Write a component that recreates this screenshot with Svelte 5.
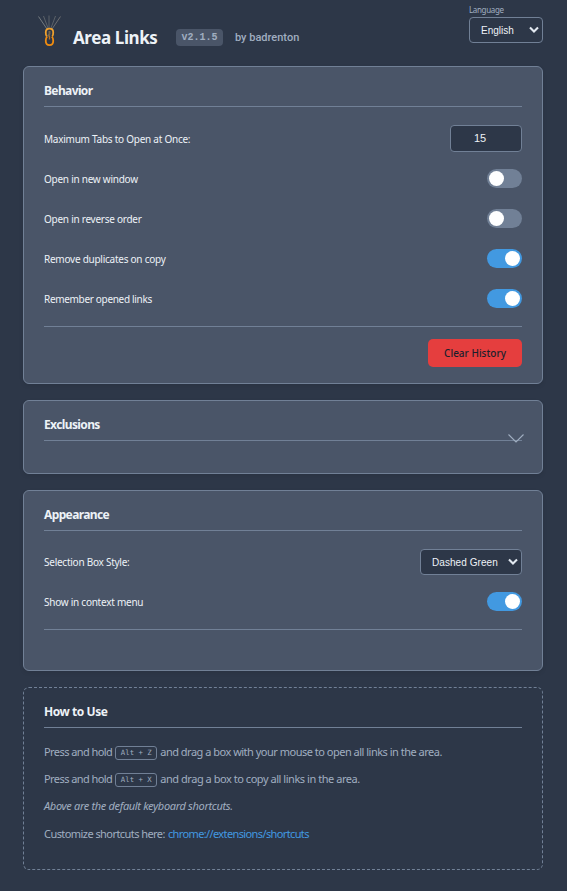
<script>
  let newWindow = $state(false);
  let reverse = $state(false);
  let dedupe = $state(true);
  let remember = $state(true);
  let contextMenu = $state(true);
  let maxTabs = $state('15');
</script>

{#snippet arrow()}
  <svg class="arrow" width="10" height="8" viewBox="0 0 10 8"><path d="M1 1.5 5 5.5 9 1.5" fill="none" stroke="#e2e8f0" stroke-width="2.1" /></svg>
{/snippet}

<main>
  <header>
    <svg class="logo" width="26" height="32" viewBox="0 0 26 32" fill="none">
      <g stroke="#5c6269" stroke-width="1">
        <path d="M1.5 1.5 10 14" stroke="#747b80" /><path d="M6.5 1 11 13" /><path d="M12 .5V13" /><path d="M18.500 1 14 13" /><path d="M23.500 1.500 15 14" stroke="#6c6d70" />
      </g>
      <path d="M9.800 21.500c-1.200-1.200-1-2.500-1-4.500 0-4.600 7.400-4.600 7.400 0 0 2 .2 3.300-1 4.500" stroke="#eda02e" stroke-width="1.800" />
      <path d="M12.500 16v3l-2 2.500" stroke="#77674d" stroke-width="2" />
      <path d="M10.300 21.800c-1.700 1-1.500 2.200-1.500 4.400 0 5.200 7.400 5.200 7.400 0 0-2.200.2-3.400-1.500-4.400" stroke="#f08c10" stroke-width="1.800" />
      <path d="M12.500 20.500v4" stroke="#b6742a" stroke-width="1.300" />
    </svg>
    <h1>Area Links</h1>
    <span class="version">v2.1.5</span>
    <span class="author">by badrenton</span>
    <div class="language">
      <span class="langlabel">Language</span>
      <button class="select lang"><span>English</span>{@render arrow()}</button>
    </div>
  </header>

  <section class="behavior">
    <h2>Behavior</h2>
    <div class="row"><label for="max" class="t1">Maximum Tabs to Open at Once:</label><input id="max" bind:value={maxTabs} /></div>
    <div class="row"><span class="t2">Open in new window</span><button class="toggle" class:on={newWindow} aria-label="Open in new window" onclick={() => (newWindow = !newWindow)}><i></i></button></div>
    <div class="row"><span class="t3">Open in reverse order</span><button class="toggle" class:on={reverse} aria-label="Open in reverse order" onclick={() => (reverse = !reverse)}><i></i></button></div>
    <div class="row"><span class="t4">Remove duplicates on copy</span><button class="toggle" class:on={dedupe} aria-label="Remove duplicates on copy" onclick={() => (dedupe = !dedupe)}><i></i></button></div>
    <div class="row"><span class="t5">Remember opened links</span><button class="toggle" class:on={remember} aria-label="Remember opened links" onclick={() => (remember = !remember)}><i></i></button></div>
    <div class="actions"><button class="clear">Clear History</button></div>
  </section>

  <section class="exclusions">
    <h2>Exclusions</h2>
    <svg class="chevron" width="18" height="11" viewBox="0 0 18 11"><path d="M1.500 1.500 9 9 16.500 1.500" fill="none" stroke="#a0aec0" stroke-width="1.100" /></svg>
  </section>

  <section class="appearance">
    <h2>Appearance</h2>
    <div class="row"><span class="t6">Selection Box Style:</span><button class="select box"><span>Dashed Green</span>{@render arrow()}</button></div>
    <div class="row"><span class="t7">Show in context menu</span><button class="toggle" class:on={contextMenu} aria-label="Show in context menu" onclick={() => (contextMenu = !contextMenu)}><i></i></button></div>
    <div class="actions"></div>
  </section>

  <section class="help">
    <h2>How to Use</h2>
    <p><span class="press">Press and hold</span><kbd>Alt + Z</kbd><span class="h1t">and drag a box with your mouse to open all links in the area.</span></p>
    <p><span class="press">Press and hold</span><kbd>Alt + X</kbd><span class="h2t">and drag a box to copy all links in the area.</span></p>
    <p><em>Above are the default keyboard shortcuts.</em></p>
    <p><span class="custom">Customize shortcuts here:</span><a href="chrome://extensions/shortcuts">chrome://extensions/shortcuts</a></p>
  </section>
</main>

<style>
  :global(body) { background: #2d3748; }
  main {
    box-sizing: border-box;
    height: 891px;
    padding: 0 24px 0 23px;
    overflow: hidden;
    color: #edf2f7;
    font-family: "Noto Sans", sans-serif;
    font-size: 10px;
    white-space: nowrap;
  }
  header { display: flex; height: 66px; align-items: flex-start; }
  .logo { margin: 15px 0 0 14px; flex: none; }
  h1 { width: 103px; margin: 26px 0 0 10px; font-size: 17px; line-height: 24px; letter-spacing: -0.4px; }
  .version {
    box-sizing: border-box; width: 47px; height: 17px; margin-top: 29px; border-radius: 4px;
    background: #4a5568; color: #a0aec0; text-align: center;
    font: bold 10px/17px "Liberation Mono", monospace;
  }
  .author { margin: 30px 0 0 12px; color: #a0aec0; font: 500 11px/15px Roboto, sans-serif; }
  .language { display: flex; flex-direction: column; width: 74px; margin-left: auto; padding-top: 4px; }
  .langlabel { height: 13px; color: #a0aec0; font-size: 8px; line-height: 11px; letter-spacing: -0.35px; }
  button { padding: 0; border: 0; }
  .select {
    display: flex; box-sizing: border-box; align-items: center; justify-content: space-between;
    height: 26px; padding: 0 3px 0 11px; border: 1px solid #718096; border-radius: 4px;
    background: #2d3748; color: #edf2f7; font: 10px "Liberation Sans", sans-serif;
  }
  .lang { width: 74px; }
  .box { width: 102px; }
  section {
    position: relative; box-sizing: border-box; padding: 13px 20px 0; margin-bottom: 16px;
    border: 1px solid #718096; border-radius: 6px; background: #4a5568;
    box-shadow: 0 2px 4px rgb(0 0 0 / 8%);
  }
  .behavior { height: 318px; }
  .exclusions { height: 74px; }
  .appearance { height: 181px; }
  .help { height: 183px; border-style: dashed; background: none; box-shadow: none; }
  h2 { box-sizing: border-box; height: 27px; margin: 0 0 12px; border-bottom: 1px solid #718096; font-size: 12px; line-height: 21px; letter-spacing: -0.62px; }
  .row { display: flex; height: 40px; align-items: center; justify-content: space-between; letter-spacing: -0.25px; }
  .t5 { letter-spacing: -0.32px; }
  input {
    box-sizing: border-box; width: 72px; height: 27px; margin: 0 0 2px; padding: 0 12px 0 0; border: 1px solid #718096;
    border-radius: 4px; outline: 0; background: #2d3748; color: #edf2f7; text-align: center; font: 11px "Liberation Sans", sans-serif;
  }
  .toggle { width: 35px; height: 19px; padding: 2px; border-radius: 10px; background: #718096; margin-top: -1px; }
  .toggle i { display: block; width: 15px; height: 15px; border-radius: 50%; background: white; }
  .on { background: #4299e1; }
  .on i { margin-left: 16px; }
  .actions { display: flex; justify-content: flex-end; margin-top: 7px; padding-top: 12px; border-top: 1px solid #718096; }
  .clear { width: 94px; height: 28px; border-radius: 5px; background: #e53e3e; color: #1a202c; font: 500 10px "Noto Sans", sans-serif; }
  .chevron { position: absolute; right: 17px; top: 32px; }
  .appearance h2 { margin-bottom: 11px; }
  .box { letter-spacing: 0.06px; }
  .help h2 { margin-bottom: 10px; letter-spacing: -0.45px; }
  p { display: flex; height: 27.200px; margin: 0; align-items: center; color: #a0aec0; font-size: 11px; letter-spacing: -0.3px; }
  .press { letter-spacing: -0.57px; }
  .h1t { letter-spacing: -0.5px; }
  .h2t { letter-spacing: -0.46px; }
  em { letter-spacing: -0.33px; }
  .custom { letter-spacing: -0.56px; }
  kbd {
    box-sizing: border-box; width: 42px; height: 14px; margin: 2px 3px 0; border: 1px solid #718096; border-radius: 3px;
    color: #a0aec0; text-align: center; letter-spacing: 0; font: 7.300px/12px "DejaVu Sans Mono", monospace;
  }
  a { margin-left: 3px; color: #4299e1; text-decoration: none; letter-spacing: -0.62px; }
</style>
